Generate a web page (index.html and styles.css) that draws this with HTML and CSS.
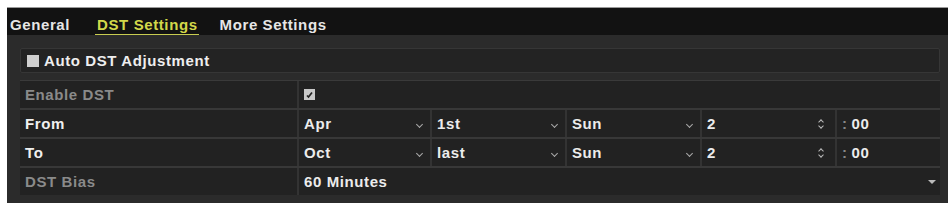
FILE: index.html
```html
<!DOCTYPE html>
<html lang="en">
<head>
    <meta charset="UTF-8">
    <title>DST Settings</title>
    <link rel="stylesheet" href="styles.css">
</head>
<body>
    <div class="panel">
        <!-- Tabs -->
        <div class="tabs">
            <span class="tab">General</span>
            <span class="tab active">DST Settings</span>
            <span class="tab">More Settings</span>
        </div>

        <div class="content">
            <div class="group-row">
                <span class="box"></span>
                <span>Auto DST Adjustment</span>
            </div>

            <div class="rows">
                <div class="row">
                    <div class="label dim">Enable DST</div>
                    <div class="cell wide">
                        <span class="check">
                            <svg width="11" height="11" viewBox="0 0 11 11"><path d="M3 6.5 L4.5 8 L8 3.5" stroke="#222" stroke-width="1.7" fill="none"/></svg>
                        </span>
                    </div>
                </div>
                <div class="row">
                    <div class="label">From</div>
                    <div class="cell sel">Apr<i class="arrow"></i></div>
                    <div class="cell sel">1st<i class="arrow"></i></div>
                    <div class="cell sel">Sun<i class="arrow"></i></div>
                    <div class="cell sel">2<i class="spin"></i></div>
                    <div class="cell"><span class="colon">:</span>00</div>
                </div>
                <div class="row">
                    <div class="label">To</div>
                    <div class="cell sel">Oct<i class="arrow"></i></div>
                    <div class="cell sel">last<i class="arrow"></i></div>
                    <div class="cell sel">Sun<i class="arrow"></i></div>
                    <div class="cell sel">2<i class="spin"></i></div>
                    <div class="cell"><span class="colon">:</span>00</div>
                </div>
                <div class="row">
                    <div class="label dim">DST Bias</div>
                    <div class="cell wide sel">60 Minutes<i class="tri"></i></div>
                </div>
            </div>
        </div>
    </div>
</body>
</html>
```

FILE: styles.css
```css
body {
    margin: 0;
    background: #fff;
    font-family: "Liberation Sans", Arial, sans-serif;
    font-size: 15px;
    font-weight: bold;
    letter-spacing: 0.6px;
    color: #ececec;
}
.panel {
    margin: 7px 0 0 7px;
    height: 196px;
    background: #2b2b2b;
    border-top: 1px solid #9a9a9a;
    box-sizing: border-box;
}
.tabs {
    height: 27px;
    background: #121212;
    display: flex;
    align-items: flex-end;
    padding-left: 3px;
}
.tab {
    padding-bottom: 2px;
    margin-right: 25px;
    color: #e6e6e6;
}
.tab.active {
    color: #d3d84a;
    border-bottom: 1px solid #c8cc50;
    padding: 0 1px 1px 2px;
    margin-bottom: 0;
    margin-right: 21px;
}
.content {
    padding: 13px 8px 0 13px;
}
.group-row {
    height: 25px;
    background: #232323;
    border: 1px solid #363636;
    border-radius: 2px;
    box-sizing: border-box;
    display: flex;
    align-items: center;
    padding-left: 6px;
    color: #eee;
}
.box {
    width: 12px;
    height: 12px;
    background: #cfcfcf;
    margin-right: 5px;
}
.rows {
    margin-top: 7px;
    border-top: 1px solid #3a3a3a;
    display: flex;
    flex-direction: column;
    gap: 2px;
    background: #383838;
}
.row {
    display: grid;
    grid-template-columns: 277px 133px 135px 135px 135px 1fr;
    height: 27px;
    background: #222;
}
.label, .cell {
    display: flex;
    align-items: center;
    padding-left: 5px;
    position: relative;
}
.label {
    color: #f0f0f0;
}
.label.dim {
    color: #8a8a8a;
}
.cell {
    border-left: 2px solid #333;
}
.cell.wide {
    grid-column: 2 / 7;
}
.check {
    width: 11px;
    height: 11px;
    background: #c8c8c8;
    display: flex;
}
.colon {
    color: #888;
    margin-right: 4px;
}
.arrow {
    position: absolute;
    right: 8px;
    top: 12px;
    width: 4px;
    height: 4px;
    border-right: 1.5px solid #aaa;
    border-bottom: 1.5px solid #aaa;
    transform: rotate(45deg);
}
.spin {
    position: absolute;
    right: 11px;
    top: 9px;
    width: 6px;
    height: 9px;
}
.spin::before, .spin::after {
    content: "";
    position: absolute;
    left: 1px;
    width: 3px;
    height: 3px;
    border-left: 1.5px solid #bbb;
    border-top: 1.5px solid #bbb;
}
.spin::before {
    top: 1px;
    transform: rotate(45deg);
}
.spin::after {
    top: 5px;
    transform: rotate(225deg);
}
.tri {
    position: absolute;
    right: 4px;
    top: 12px;
    border-left: 4px solid transparent;
    border-right: 4px solid transparent;
    border-top: 4px solid #bbb;
}
```
